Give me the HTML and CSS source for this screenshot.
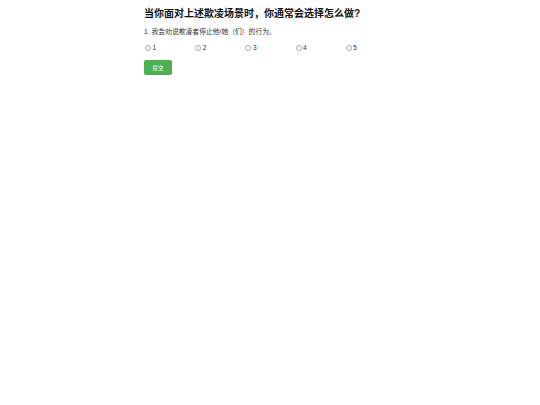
FILE: index.html
```html
<!DOCTYPE html>
<html lang="zh">
<head>
<meta charset="utf-8">
<link rel="stylesheet" href="styles.css">
</head>
<body>
<div class="survey">
  <h1 class="title">当你面对上述欺凌场景时，你通常会选择怎么做?</h1>
  <p class="question">1. 我会劝说欺凌者停止他/她（们）的行为。</p>
  <div class="options">
    <label class="option"><span class="radio"></span>1</label>
    <label class="option"><span class="radio"></span>2</label>
    <label class="option"><span class="radio"></span>3</label>
    <label class="option"><span class="radio"></span>4</label>
    <label class="option"><span class="radio"></span>5</label>
  </div>
  <button class="submit">提交</button>
</div>
</body>
</html>
```
FILE: styles.css
```css
html, body {
  margin: 0;
  padding: 0;
  background: #fff;
}
body {
  font-family: "Liberation Sans", Arial, "Noto Sans CJK SC", sans-serif;
  color: #222;
}
.survey {
  width: 252px;
  margin: 0 auto;
  padding-top: 7px;
}
.title {
  margin: 0;
  font-size: 10px;
  line-height: 13px;
  font-weight: bold;
  color: #111;
}
.question {
  margin: 8px 0 0 0;
  font-size: 6.8px;
  line-height: 8px;
  color: #333;
}
.options {
  display: grid;
  grid-template-columns: repeat(5, 1fr);
  margin-top: 8px;
  padding-left: 1px;
}
.option {
  display: flex;
  align-items: center;
  gap: 1.5px;
  font-size: 6.6px;
  line-height: 8px;
  color: #333;
}
.radio {
  width: 4px;
  height: 4px;
  border: 0.6px solid #aaa;
  border-radius: 50%;
  display: inline-block;
}
.submit {
  display: block;
  margin-top: 8px;
  width: 28px;
  height: 15px;
  padding: 0;
  border: none;
  border-radius: 2px;
  background: #4caf50;
  color: #fff;
  font-family: "Liberation Sans", Arial, "Noto Sans CJK SC", sans-serif;
  font-size: 5.5px;
}
```
